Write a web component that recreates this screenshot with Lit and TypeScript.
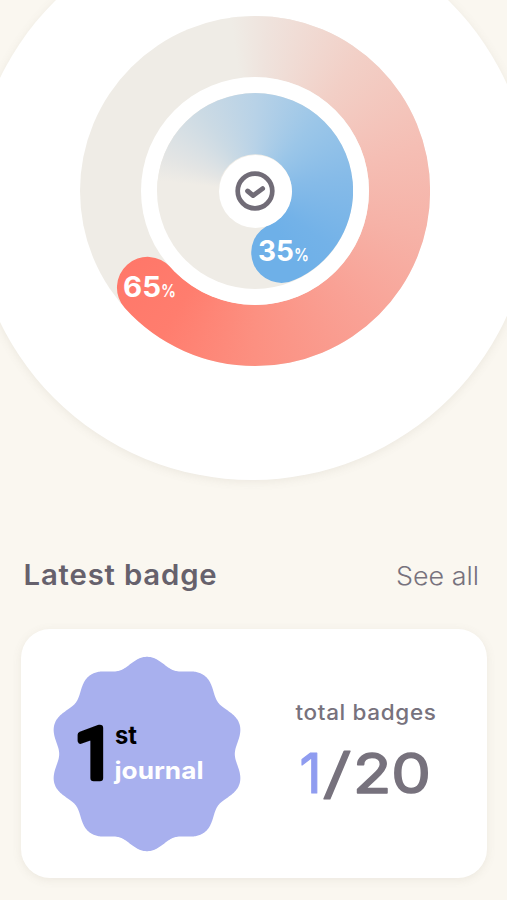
import { LitElement, html, svg, css } from "lit";
import { customElement } from "lit/decorators.js";

// Ten rounded lobes with smooth valleys between them.
const scallop = (): string => {
  const lobes = 10;
  const pts: string[] = [];
  for (let i = 0; i < 720; i++) {
    const a = (i / 720) * Math.PI * 2;
    const r = 92.6 + 4.7 * Math.cos(lobes * a) - 0.1 * Math.cos(2 * lobes * a);
    pts.push(`${(98 + r * Math.sin(a)).toFixed(2)} ${(98 - r * Math.cos(a)).toFixed(2)}`);
  }
  return `M${pts.join("L")}Z`;
};

@customElement("progress-rings")
class ProgressRings extends LitElement {
  static styles = css`
    :host { display: grid; width: 350px; height: 350px; font-family: Inter, sans-serif; }
    .layer { grid-area: 1 / 1; border-radius: 50%; place-self: center; z-index: 0; }
    .track { width: 350px; height: 350px; background: #efece6; }
    .coral {
      width: 350px; height: 350px; border-radius: 0;
      background: conic-gradient(from -8deg, #efece6 0deg, #efe3dd 12deg, #f2cfc6 46deg, #f5beb4 83deg, #f6b2a7 113deg, #f9a195 148deg, #fc9081 188deg, #ff7d6e 221deg, #ff7769 250deg, #ff7769 295deg, #efece6 295deg);
      clip-path: path("M175 0A175 175 0 0 1 175 350A175 175 0 0 1 44.6 292.1A30.6 30.6 0 0 1 90.4 251.1A113.8 113.8 0 0 0 288.8 175A113.8 113.8 0 0 0 175 61.2L150 62V1.8Z");
    }
    .gap { width: 228px; height: 228px; background: #fff; }
    .disc { width: 196px; height: 196px; background: #efece6; }
    .blue {
      width: 196px; height: 196px; border-radius: 0;
      background: conic-gradient(from -84deg, #efece6 0deg, #e4e5e4 14deg, #cbdae4 50deg, #b8d2e7 84deg, #9bc6e8 125deg, #86bbe8 165deg, #73b2e8 210deg, #6eb0e8 235deg, #6eb0e8 310deg, #efece6 310deg);
      clip-path: path("M0 98A98 98 0 0 1 196 98A98 98 0 0 1 138.2 186.6A30.4 30.4 0 1 1 114.4 130.8A36.7 36.7 0 0 0 98 61.3A36.7 36.7 0 0 0 61.3 98Z");
    }
    .hub { width: 73px; height: 73px; background: #fff; display: grid; place-items: center; }
    .marks { grid-area: 1 / 1; width: 350px; height: 350px; z-index: 1; }
    .num { font-size: 28px; font-weight: 700; fill: #fff; }
    .pct { font-size: 17px; font-weight: 600; fill: #fff; }
  `;
  render() {
    return html`
      <div class="layer track"></div>
      <div class="layer coral"></div>
      <div class="layer gap"></div>
      <div class="layer disc"></div>
      <div class="layer blue"></div>
      <div class="layer hub">
        <svg width="40" height="40" viewBox="0 0 40 40" fill="none" stroke="#716c77" stroke-linecap="round" stroke-linejoin="round">
          <circle cx="20" cy="20" r="17.3" stroke-width="4.7" />
          <path d="M12.6 20L18.1 24.6L27.6 17.6" stroke-width="4.9" />
        </svg>
      </div>
      <svg class="marks" viewBox="0 0 350 350">
        <text class="num" x="43" y="280.5" textLength="38" lengthAdjust="spacingAndGlyphs">65</text>
        <text class="pct" x="81" y="280.5" textLength="15" lengthAdjust="spacingAndGlyphs">%</text>
        <text class="num" x="178" y="245" textLength="36" lengthAdjust="spacingAndGlyphs">35</text>
        <text class="pct" x="214" y="245" textLength="15" lengthAdjust="spacingAndGlyphs">%</text>
      </svg>
    `;
  }
}

@customElement("badge-seal")
class BadgeSeal extends LitElement {
  static styles = css`
    :host { display: block; width: 196px; height: 196px; font-family: Inter, sans-serif; }
    .one { font-family: Roboto, sans-serif; font-size: 70px; font-weight: 400; stroke: #000; stroke-width: 6.5; stroke-linejoin: round; }
    .st { font-size: 24.5px; font-weight: 700; }
    .journal { font-size: 24px; font-weight: 700; fill: #fff; }
  `;
  render() {
    return html`<svg width="196" height="196" viewBox="0 0 196 196">
      ${svg`<path d=${scallop()} fill="#a8b0ee" />`}
      <text class="one" x="26" y="122">1</text>
      <text class="st" x="66" y="88" textLength="22" lengthAdjust="spacingAndGlyphs">st</text>
      <text class="journal" x="65.5" y="122.5" textLength="89" lengthAdjust="spacingAndGlyphs">journal</text>
    </svg>`;
  }
}

@customElement("app-root")
class AppRoot extends LitElement {
  static styles = css`
    :host {
      display: flex; flex-direction: column; width: 507px; height: 900px;
      overflow: hidden; background: #faf7f0; font-family: Inter, sans-serif; color: #66616c;
    }
    .stage { height: 480px; flex: none; display: flex; flex-direction: column; justify-content: flex-end; align-items: center; }
    .plate {
      width: 560px; height: 560px; flex: none; border-radius: 50%; background: #fff; margin-right: 3px;
      display: grid; place-items: center; box-shadow: 0 2px 10px rgba(120, 110, 90, 0.1);
    }
    progress-rings { margin: 0 0 18px 6.4px; }
    .heading { margin-top: 76px; height: 38px; padding: 0 28px 0 23px; display: flex; justify-content: space-between; align-items: center; }
    svg { display: block; overflow: visible; }
    .title { font-size: 28px; font-weight: 600; fill: #66616c; letter-spacing: 0.8px; }
    .link { font-size: 25px; font-weight: 300; fill: #77727d; }
    .card {
      margin: 35px 20px 0 20.5px; height: 249px; border-radius: 29px; background: #fff;
      box-shadow: 0 2px 10px rgba(120, 110, 90, 0.1);
      display: flex; align-items: center; padding: 0 51px 0 28.5px; box-sizing: border-box; justify-content: space-between;
    }
    .label { font-size: 21px; font-weight: 500; fill: #77727d; letter-spacing: 0.6px; }
    .count { font-size: 55px; font-weight: 400; fill: #77727d; stroke: #77727d; stroke-linejoin: round; stroke-width: 1.6; }
    .earned { fill: #8f9cf0; stroke: #8f9cf0; stroke-width: 1.2; }
    .slash { font-weight: 300; stroke-width: 1.2; }
  `;
  render() {
    return html`
      <section class="stage">
        <div class="plate"><progress-rings></progress-rings></div>
      </section>
      <header class="heading">
        <svg width="194" height="38"><text class="title" x="0.5" y="28.5" textLength="194" lengthAdjust="spacingAndGlyphs">Latest badge</text></svg>
        <svg width="83" height="38"><text class="link" x="0" y="28.5" textLength="83" lengthAdjust="spacingAndGlyphs">See all</text></svg>
      </header>
      <section class="card">
        <badge-seal></badge-seal>
        <svg width="141" height="110">
          <text class="label" x="0.5" y="21" textLength="141" lengthAdjust="spacingAndGlyphs">total badges</text>
          <text class="count earned" x="4.5" y="94" textLength="22" lengthAdjust="spacingAndGlyphs">1</text>
          <text class="count slash" x="27" y="94" textLength="30" lengthAdjust="spacingAndGlyphs">/</text>
          <text class="count" x="58" y="94" textLength="78" lengthAdjust="spacingAndGlyphs">20</text>
        </svg>
      </section>
    `;
  }
}
